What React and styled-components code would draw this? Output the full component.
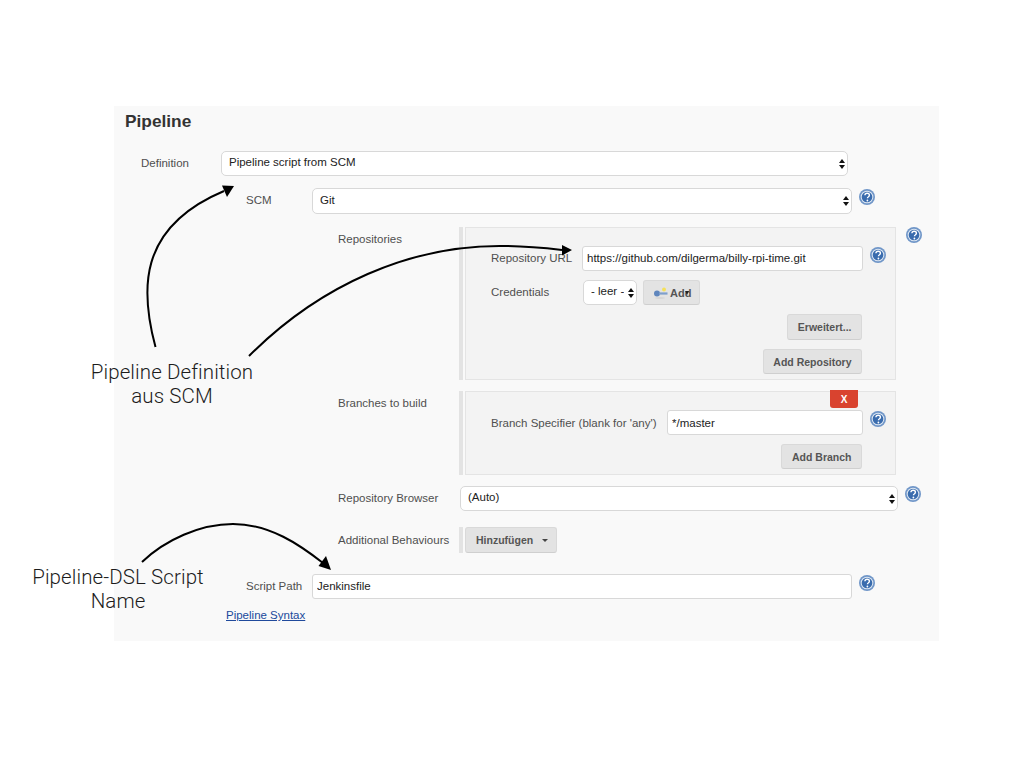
import React from "react";
import styled, { createGlobalStyle } from "styled-components";

const GlobalStyle = createGlobalStyle`
  html, body {
    margin: 0;
    padding: 0;
    background: #fff;
  }
  body {
    font-family: "Liberation Sans", Arial, sans-serif;
  }
`;

const HelpIcon = ({ top, gap }) => (
  <HelpSvg $top={top} $gap={gap} viewBox="0 0 16 16">
    <circle cx="8" cy="8" r="8" fill="#7096c8" />
    <circle cx="8" cy="8" r="6.300" fill="#dfe8f3" />
    <circle cx="8" cy="8" r="5.300" fill="#3a6cae" />
    <path
      d="M5.900 6.300c.1-1.300 1-2 2.300-2 1.300 0 2.200.8 2.200 1.900 0 1-.6 1.400-1.200 1.800-.5.3-.7.6-.7 1.200"
      fill="none"
      stroke="#fff"
      strokeWidth="1.400"
    />
    <circle cx="8.400" cy="11.500" r="0.900" fill="#fff" />
  </HelpSvg>
);

const Select = ({ value, width, height }) => (
  <SelectWrap $width={width}>
    <SelectBox $height={height} defaultValue={value}>
      <option>{value}</option>
    </SelectBox>
  </SelectWrap>
);

const KeyIcon = () => (
  <svg width="15" height="12" viewBox="0 0 15 12">
    <ellipse cx="7" cy="11" rx="5" ry="0.800" fill="#d2d2d2" />
    <circle cx="4" cy="6.500" r="3" fill="#5f86bd" />
    <rect x="6" y="5.400" width="8.500" height="2.200" fill="#7f9fcb" />
    <circle cx="11" cy="2.400" r="2" fill="#f5e15a" />
  </svg>
);

const Arrows = () => (
  <Overlay viewBox="0 0 1024 768">
    <g fill="none" stroke="#000" strokeWidth="2">
      <path d="M155.500 347 C141 293 136 228 224 191" />
      <path d="M249 356 C320 285 410 245 503 246 C525 246 545 248 562 250" />
      <path d="M142 562 C165 540 200 524 233 524 C270 524 300 545 323 563" />
    </g>
    <polygon points="234,186 222,185.500 227,197" />
    <polygon points="572,250 562,245 562,255.500" />
    <polygon points="331,570 318.500,566 326,556" />
  </Overlay>
);

const App = () => (
  <Page>
    <GlobalStyle />
    <Panel>
      <Title>Pipeline</Title>

      <Row $top={19} $indent={27}>
        <Label $width={80} $lift>Definition</Label>
        <Select value="Pipeline script from SCM" width={627} height={25} />
      </Row>

      <Row $top={12} $indent={132}>
        <Label $width={66} $lift>SCM</Label>
        <Select value="Git" width={540} height={26} />
        <HelpIcon top={1} />
      </Row>

      <Row $top={13} $indent={224} $start>
        <Label $width={121}>Repositories</Label>
        <Section>
          <Bar />
          <Box>
            <BoxRow>
              <Label $width={91} $lift>Repository URL</Label>
              <Input defaultValue="https://github.com/dilgerma/billy-rpi-time.git" $width={281} />
              <HelpIcon top={1} />
            </BoxRow>
            <BoxRow $top={9}>
              <Label $width={92} $lift>Credentials</Label>
              <Select value="- leer -" width={54} height={25} />
              <AddButton>
                <KeyIcon />
                Add
                <AddCaret />
              </AddButton>
            </BoxRow>
            <ButtonRow $top={9}>
              <Button $height={26}>Erweitert...</Button>
            </ButtonRow>
            <ButtonRow $top={9}>
              <Button>Add Repository</Button>
            </ButtonRow>
          </Box>
        </Section>
        <HelpIcon top={0} gap={10} />
      </Row>

      <Row $top={11} $indent={224} $start>
        <Label $width={121}>Branches to build</Label>
        <Section>
          <Bar />
          <Box $compact>
            <DeleteButton>X</DeleteButton>
            <BoxRow>
              <Label $width={176}>Branch Specifier (blank for 'any')</Label>
              <Input defaultValue="*/master" $width={196} $low />
              <HelpIcon top={1} />
            </BoxRow>
            <ButtonRow $top={9}>
              <Button>Add Branch</Button>
            </ButtonRow>
          </Box>
        </Section>
      </Row>

      <Row $top={11} $indent={224}>
        <Label $width={122} $lift>Repository Browser</Label>
        <Select value="(Auto)" width={438} height={25} />
        <HelpIcon top={0} />
      </Row>

      <Row $top={16} $indent={224}>
        <Label $width={121}>Additional Behaviours</Label>
        <Section>
          <Bar />
          <DropButton>
            Hinzufügen
            <DropCaret />
          </DropButton>
        </Section>
      </Row>

      <Row $top={21} $indent={132}>
        <Label $width={66} $lift>Script Path</Label>
        <Input defaultValue="Jenkinsfile" $width={540} />
        <HelpIcon top={1} />
      </Row>

      <LinkRow>
        <SyntaxLink href="#pipeline-syntax">Pipeline Syntax</SyntaxLink>
      </LinkRow>
    </Panel>

    <Arrows />
    <Callout $left={72} $top={360} $width={200}>
      Pipeline Definition
      <br />
      aus SCM
    </Callout>
    <Callout $left={18} $top={565} $width={200}>
      Pipeline-DSL Script
      <br />
      Name
    </Callout>
  </Page>
);

export default App;

const Page = styled.div`
  position: relative;
  box-sizing: border-box;
  width: 1024px;
  height: 768px;
  padding: 106px 85px 127px 114px;
  background: #fff;
  overflow: hidden;
`;

const Panel = styled.div`
  height: 535px;
  padding-top: 5px;
  box-sizing: border-box;
  background: #f9f9f9;
  color: #4f4f4f;
  font-size: 11.5px;
`;

const Title = styled.h2`
  margin: 0;
  padding: 0 0 1px 11px;
  font-size: 17.300px;
  line-height: 20px;
  font-weight: bold;
  color: #333;
`;

const Row = styled.div`
  display: flex;
  align-items: ${(p) => (p.$start ? "flex-start" : "center")};
  margin-top: ${(p) => p.$top}px;
  padding-left: ${(p) => p.$indent}px;
`;

const Label = styled.div`
  flex: none;
  width: ${(p) => p.$width}px;
  margin-bottom: ${(p) => (p.$lift ? 2 : 0)}px;
  line-height: ${(p) => (p.$lift ? 22 : 24)}px;
  white-space: nowrap;
`;

const SelectWrap = styled.div`
  position: relative;
  flex: none;
  width: ${(p) => p.$width}px;

  &::before,
  &::after {
    content: "";
    position: absolute;
    right: 3px;
    border-left: 3px solid transparent;
    border-right: 3px solid transparent;
    pointer-events: none;
  }
  &::before {
    top: calc(50% - 5px);
    border-bottom: 4px solid #111;
  }
  &::after {
    top: calc(50% + 1px);
    border-top: 4px solid #111;
  }
`;

const SelectBox = styled.select`
  display: block;
  appearance: none;
  box-sizing: border-box;
  width: 100%;
  height: ${(p) => p.$height}px;
  margin: 0;
  padding: 0 12px ${(p) => (p.$height === 25 ? 3 : 2)}px 7px;
  border: 1px solid #d8d8d8;
  border-radius: 5px;
  background: #fff;
  color: #222;
  font-family: inherit;
  font-size: 11.5px;
`;

const Input = styled.input`
  flex: none;
  box-sizing: border-box;
  width: ${(p) => p.$width}px;
  height: 25px;
  margin: 0;
  padding: 0 4px ${(p) => (p.$low ? 0 : 2)}px;
  border: 1px solid #d8d8d8;
  border-radius: 3px;
  background: #fff;
  color: #222;
  font-family: inherit;
  font-size: 11.5px;
  outline: none;
`;

const HelpSvg = styled.svg`
  flex: none;
  align-self: flex-start;
  width: 16px;
  height: 16px;
  margin-top: ${(p) => p.$top}px;
  margin-left: ${(p) => p.$gap || 7}px;
`;

const Section = styled.div`
  display: flex;
  flex: none;
  gap: 2px;
`;

const Bar = styled.div`
  flex: none;
  width: 4px;
  background: #e3e3e3;
`;

const Box = styled.div`
  position: relative;
  box-sizing: border-box;
  width: 431px;
  height: ${(p) => (p.$compact ? 84 : 153)}px;
  padding: 18px 10px 0 25px;
  border: 1px solid #e4e4e4;
  background: #f3f3f3;
`;

const BoxRow = styled.div`
  display: flex;
  align-items: center;
  margin-top: ${(p) => p.$top || 0}px;
`;

const ButtonRow = styled.div`
  display: flex;
  justify-content: flex-end;
  margin-top: ${(p) => p.$top}px;
  padding-right: 23px;
`;

const Button = styled.button`
  box-sizing: border-box;
  height: ${(p) => p.$height || 25}px;
  margin: 0;
  padding: 0 9.500px;
  border: 1px solid #d9d9d9;
  border-bottom-color: #cfcfcf;
  border-radius: 3px;
  background: #e3e3e3;
  color: #555;
  font-family: inherit;
  font-size: 10.500px;
  font-weight: bold;
`;

const AddButton = styled(Button)`
  display: flex;
  align-items: center;
  gap: 2px;
  width: 57px;
  margin-left: 6px;
  padding: 0 0 0 9px;
  font-size: 11px;
`;

const AddCaret = styled.span`
  margin-left: -8px;
  border-left: 2.500px solid transparent;
  border-right: 2.500px solid transparent;
  border-top: 4px solid #222;
`;

const DropButton = styled(Button)`
  display: flex;
  align-items: center;
  justify-content: space-between;
  width: 92px;
  height: 26px;
  padding: 0 8px 0 10px;
`;

const DropCaret = styled.span`
  border-left: 3.500px solid transparent;
  border-right: 3.500px solid transparent;
  border-top: 3.500px solid #444;
`;

const DeleteButton = styled.button`
  position: absolute;
  top: -2px;
  right: 37px;
  width: 28px;
  height: 18px;
  padding: 0;
  border: none;
  border-radius: 0 0 3px 3px;
  background: #d9432f;
  color: #fff;
  font-family: inherit;
  font-size: 10px;
  font-weight: bold;
`;

const LinkRow = styled.div`
  margin-top: 8px;
  padding-left: 112px;
  line-height: 16px;
`;

const SyntaxLink = styled.a`
  color: #204a9c;
  text-decoration: underline;
`;

const Overlay = styled.svg`
  position: absolute;
  top: 0;
  left: 0;
  width: 1024px;
  height: 768px;
  pointer-events: none;
`;

const Callout = styled.div`
  position: absolute;
  left: ${(p) => p.$left}px;
  top: ${(p) => p.$top}px;
  width: ${(p) => p.$width}px;
  color: #1c1c1c;
  font-family: Roboto, "Liberation Sans", sans-serif;
  font-size: 20.500px;
  font-weight: 300;
  line-height: 24px;
  letter-spacing: 0.100px;
  text-align: center;
`;
